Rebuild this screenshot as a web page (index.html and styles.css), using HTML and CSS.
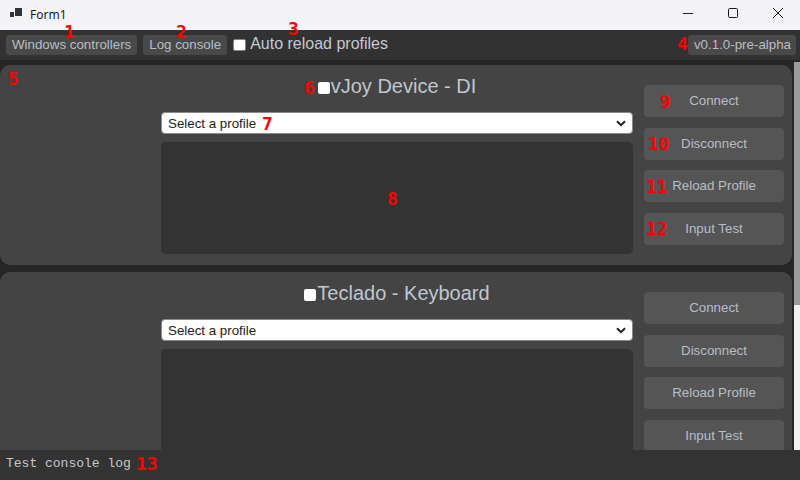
FILE: index.html
```html
<!DOCTYPE html>
<html>
<head>
<meta charset="utf-8">
<link rel="stylesheet" href="styles.css">
</head>
<body>
<div class="window">
  <div class="titlebar">
    <svg class="appicon" width="12" height="12" viewBox="0 0 12 12">
      <rect x="5" y="0" width="7" height="8" fill="#333"/>
      <rect x="0" y="4" width="4" height="5" fill="#333"/>
    </svg>
    <span class="title">Form1</span>
    <div class="controls">
      <div class="ctl"><svg width="12" height="12" viewBox="0 0 12 12"><line x1="1" y1="6.5" x2="11" y2="6.5" stroke="#1b1b1b" stroke-width="1"/></svg></div>
      <div class="ctl"><svg width="12" height="12" viewBox="0 0 12 12"><rect x="1.5" y="1.5" width="9" height="9" rx="1" fill="none" stroke="#1b1b1b" stroke-width="1"/></svg></div>
      <div class="ctl"><svg width="12" height="12" viewBox="0 0 12 12"><path d="M1 1 L11 11 M11 1 L1 11" stroke="#1b1b1b" stroke-width="1"/></svg></div>
    </div>
  </div>
  <div class="toolbar">
    <span class="tbtn">Windows controllers</span>
    <span class="tbtn">Log console</span>
    <span class="check tcheck"></span>
    <span class="autolabel">Auto reload profiles</span>
    <span class="tbtn version">v0.1.0-pre-alpha</span>
  </div>
  <div class="main">
    <div class="scroller">
      <div class="panels">
        <div class="panel">
          <div class="center">
            <div class="ptitle"><span class="check pcheck"></span>vJoy Device - DI</div>
            <div class="select"><span>Select a profile</span>
              <svg width="10" height="7" viewBox="0 0 10 7"><path d="M1 1.2 L5 5.2 L9 1.2" fill="none" stroke="#222" stroke-width="2"/></svg>
            </div>
            <div class="box"></div>
          </div>
          <div class="side">
            <div class="pbtn">Connect</div>
            <div class="pbtn">Disconnect</div>
            <div class="pbtn">Reload Profile</div>
            <div class="pbtn">Input Test</div>
          </div>
        </div>
        <div class="panel">
          <div class="center">
            <div class="ptitle"><span class="check pcheck"></span>Teclado - Keyboard</div>
            <div class="select"><span>Select a profile</span>
              <svg width="10" height="7" viewBox="0 0 10 7"><path d="M1 1.2 L5 5.2 L9 1.2" fill="none" stroke="#222" stroke-width="2"/></svg>
            </div>
            <div class="box"></div>
          </div>
          <div class="side">
            <div class="pbtn">Connect</div>
            <div class="pbtn">Disconnect</div>
            <div class="pbtn">Reload Profile</div>
            <div class="pbtn">Input Test</div>
          </div>
        </div>
      </div>
      <div class="scrollbar">
        <div class="thumb"></div>
        <div class="track"></div>
      </div>
    </div>
    <div class="console">Test console log</div>
  </div>

  <div class="marks">
    <span class="mark m1">1</span>
    <span class="mark m2">2</span>
    <span class="mark m3">3</span>
    <span class="mark m4">4</span>
    <span class="mark m5">5</span>
    <span class="mark m6">6</span>
    <span class="mark m7">7</span>
    <span class="mark m8">8</span>
    <span class="mark m9">9</span>
    <span class="mark m10">10</span>
    <span class="mark m11">11</span>
    <span class="mark m12">12</span>
    <span class="mark m13">13</span>
  </div>
</div>
</body>
</html>
```

FILE: styles.css
```css
* { box-sizing: border-box; }
html, body { margin: 0; padding: 0; }
body {
  width: 800px;
  height: 480px;
  overflow: hidden;
  font-family: "Liberation Sans", Arial, sans-serif;
  background: #262626;
}
.window { position: relative; width: 800px; height: 480px; }

.titlebar {
  height: 30px;
  background: #f3f3f8;
  display: flex;
  align-items: center;
}
.appicon { margin-left: 10px; margin-top: -2px; }
.title {
  margin-left: 8px;
  font-family: "Noto Sans", "Liberation Sans", sans-serif;
  font-size: 12px;
  color: #1a1a1a;
  margin-top: -1px;
}
.controls { margin-left: auto; display: flex; height: 30px; }
.ctl {
  width: 45px;
  height: 30px;
  display: flex;
  align-items: center;
  justify-content: center;
  margin-top: -2px;
}

.toolbar {
  height: 30px;
  background: #323232;
  display: flex;
  align-items: center;
  padding: 0 4px 0 6px;
  gap: 6px;
}
.tbtn {
  height: 20px;
  line-height: 20px;
  padding: 0 6px;
  background: #494949;
  color: #b6bec6;
  font-size: 13.33px;
  border-radius: 3px;
  white-space: nowrap;
}
.check {
  display: inline-block;
  width: 12px;
  height: 12px;
  background: #fff;
  border-radius: 2px;
}
.tcheck { width: 13px; border: 1px solid #858585; }
.autolabel {
  font-size: 16px;
  color: #c2cad2;
  margin-left: -2px;
  margin-top: -2px;
}
.version { margin-left: auto; padding: 0 5px 0 6px; }

.main {
  height: 420px;
  display: flex;
  flex-direction: column;
}
.scroller {
  height: 390px;
  display: flex;
  overflow: hidden;
}
.panels {
  width: 794px;
  padding: 5px 2px 0 0;
  display: flex;
  flex-direction: column;
  gap: 7px;
}
.panel {
  flex: none;
  height: 200px;
  background: #444444;
  border-radius: 10px;
  display: flex;
  padding-left: 161px;
}
.center {
  width: 472px;
  display: flex;
  flex-direction: column;
  padding-top: 10px;
}
.ptitle {
  font-size: 20px;
  line-height: 22px;
  color: #bfc7cf;
  text-align: center;
  white-space: nowrap;
}
.pcheck { vertical-align: -1px; margin-right: 1px; border-radius: 2px; }
.select {
  margin-top: 15px;
  height: 22px;
  background: #fff;
  border: 1px solid #8a8a8a;
  border-radius: 4px;
  display: flex;
  align-items: center;
  justify-content: space-between;
  padding: 0 6px 0 6px;
  font-size: 13.33px;
  color: #222;
}
.box {
  margin-top: 8px;
  height: 112px;
  background: #333333;
  border-radius: 5px;
}
.side {
  width: 140px;
  margin-left: 11px;
  padding-top: 20px;
  display: flex;
  flex-direction: column;
  gap: 10.6px;
}
.pbtn {
  height: 32px;
  line-height: 32px;
  background: #555555;
  border-radius: 4px;
  color: #b6bec6;
  font-size: 13.33px;
  text-align: center;
}
.scrollbar {
  width: 6px;
  display: flex;
  flex-direction: column;
  background: #262626;
}
.thumb { height: 243px; margin-top: 2px; background: #9b9b9b; }
.track { flex: 1; background: #f0f0f0; }

.console {
  height: 30px;
  background: #333333;
  color: #c9c9c9;
  font-family: "Liberation Mono", "DejaVu Sans Mono", monospace;
  font-size: 13px;
  line-height: 28px;
  padding-left: 6px;
}

.marks { position: absolute; left: 0; top: 0; width: 0; height: 0; }
.mark {
  position: absolute;
  font-family: "DejaVu Sans Mono", monospace;
  font-weight: bold;
  font-size: 18px;
  line-height: 18px;
  color: #ff0000;
}
.m1 { left: 64px; top: 23px; }
.m2 { left: 176px; top: 23px; }
.m3 { left: 288px; top: 20px; }
.m4 { left: 677px; top: 35px; }
.m5 { left: 8px; top: 70px; }
.m6 { left: 304px; top: 79px; }
.m7 { left: 262px; top: 115px; }
.m8 { left: 387px; top: 190px; }
.m9 { left: 660px; top: 93px; }
.m10 { left: 648px; top: 135px; }
.m11 { left: 646px; top: 178px; }
.m12 { left: 646px; top: 220px; }
.m13 { left: 136px; top: 455px; }
```
